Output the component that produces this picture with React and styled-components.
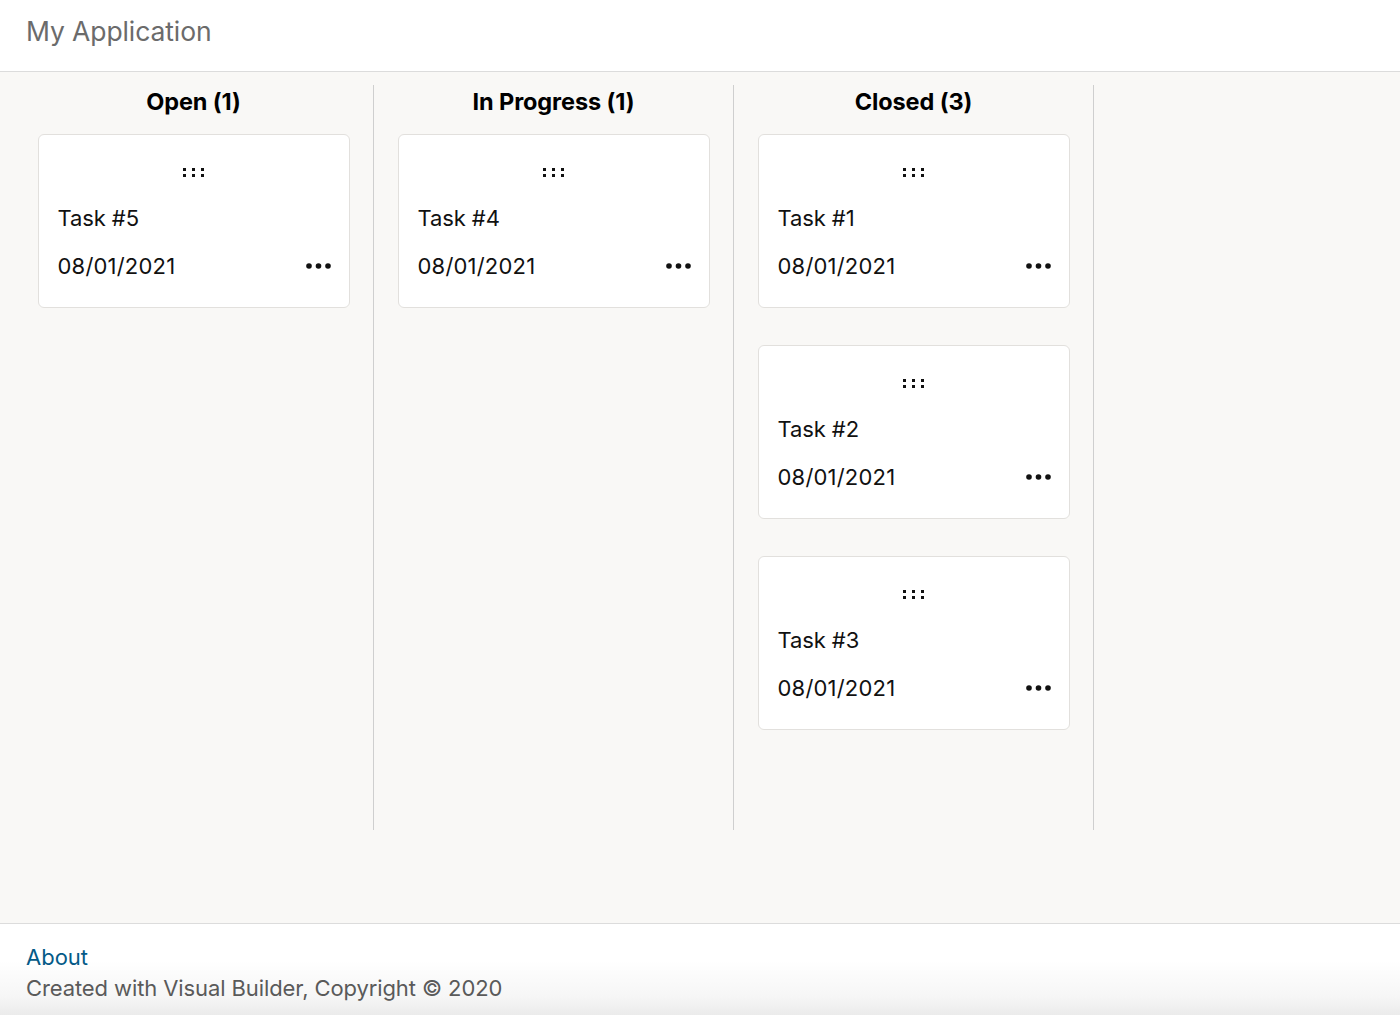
import React from 'react'
import styled, { createGlobalStyle } from 'styled-components'

const GlobalStyle = createGlobalStyle`
  html, body {
    margin: 0;
    padding: 0;
    height: 100%;
  }
  body {
    font-family: Inter, "Liberation Sans", sans-serif;
    background: #f9f8f6;
    color: #111;
  }
  #root {
    min-height: 100vh;
    display: flex;
    flex-direction: column;
  }
`

const Header = styled.header`
  height: 72px;
  box-sizing: border-box;
  padding: 14px 26px 0;
  background: #fff;
  border-bottom: 1px solid #dcdcdc;
`

const AppTitle = styled.div`
  font-size: 26.5px;
  line-height: 34px;
  color: #6b6b6b;
  letter-spacing: -0.1px;
`

const Main = styled.main`
  flex: 1;
  padding: 13px 14px 0;
  height: 836px;
  box-sizing: border-box;
`

const Board = styled.div`
  display: flex;
  height: 745px;
`

const Column = styled.section`
  width: 359px;
  border-right: 1px solid #cfcfcf;
  display: flex;
  flex-direction: column;
  align-items: center;
`

const ColumnTitle = styled.h2`
  margin: 0;
  height: 32px;
  display: flex;
  align-items: center;
  font-size: 23.5px;
  font-weight: 700;
  letter-spacing: -0.1px;
  color: #000;
`

const CardList = styled.div`
  margin-top: 17px;
  display: flex;
  flex-direction: column;
  gap: 37px;
`

const Card = styled.article`
  width: 312px;
  height: 174px;
  box-sizing: border-box;
  background: #fff;
  border: 1px solid #e2e0dd;
  border-radius: 6px;
  padding: 33px 18px 0 19px;
  display: flex;
  flex-direction: column;
`

const Handle = styled.div`
  display: flex;
  justify-content: center;
  height: 14px;
`

const CardTitle = styled.div`
  margin-top: 22px;
  font-size: 22px;
  line-height: 28px;
  letter-spacing: -0.1px;
`

const CardFooter = styled.div`
  margin-top: 20px;
  display: flex;
  align-items: center;
  justify-content: space-between;
  font-size: 22px;
  line-height: 28px;
  letter-spacing: 0.2px;
`

const MoreButton = styled.button`
  border: 0;
  background: none;
  padding: 0;
  cursor: pointer;
  display: flex;
  align-items: center;
`

const Footer = styled.footer`
  height: 92px;
  box-sizing: border-box;
  border-top: 1px solid #dcdcdc;
  padding: 18px 26px 0;
  background: linear-gradient(to bottom, #fff 0%, #fff 40%, #f6f6f6 80%, #ebebeb 100%);
`

const AboutLink = styled.a`
  display: block;
  font-size: 22px;
  line-height: 30px;
  color: #045a87;
  text-decoration: none;
`

const Copyright = styled.div`
  font-size: 22px;
  line-height: 32px;
  color: #5a5a5a;
  letter-spacing: -0.1px;
`

const GripIcon = () => (
  <svg width="23" height="10" viewBox="0 0 23 10">
    {[0, 9, 18].map(x =>
      [0, 6].map(y => <rect key={`${x}-${y}`} x={x} y={y} width="3" height="3" fill="#111" />)
    )}
  </svg>
)

const DotsIcon = () => (
  <svg width="25" height="6" viewBox="0 0 25 6">
    <circle cx="3" cy="3" r="2.8" fill="#111" />
    <circle cx="12.5" cy="3" r="2.8" fill="#111" />
    <circle cx="22" cy="3" r="2.8" fill="#111" />
  </svg>
)

const columns = [
  { title: 'Open', tasks: ['Task #5'] },
  { title: 'In Progress', tasks: ['Task #4'] },
  { title: 'Closed', tasks: ['Task #1', 'Task #2', 'Task #3'] }
]

const TaskCard = ({ name }) => (
  <Card>
    <Handle>
      <GripIcon />
    </Handle>
    <CardTitle>{name}</CardTitle>
    <CardFooter>
      <span>08/01/2021</span>
      <MoreButton type="button">
        <DotsIcon />
      </MoreButton>
    </CardFooter>
  </Card>
)

const App = () => (
  <>
    <GlobalStyle />
    <Header>
      <AppTitle>My Application</AppTitle>
    </Header>
    <Main>
      <Board>
        {columns.map(col => (
          <Column key={col.title}>
            <ColumnTitle>
              {col.title} ({col.tasks.length})
            </ColumnTitle>
            <CardList>
              {col.tasks.map(t => (
                <TaskCard key={t} name={t} />
              ))}
            </CardList>
          </Column>
        ))}
      </Board>
    </Main>
    <Footer>
      <AboutLink href="#">About</AboutLink>
      <Copyright>Created with Visual Builder, Copyright © 2020</Copyright>
    </Footer>
  </>
)

export default App
